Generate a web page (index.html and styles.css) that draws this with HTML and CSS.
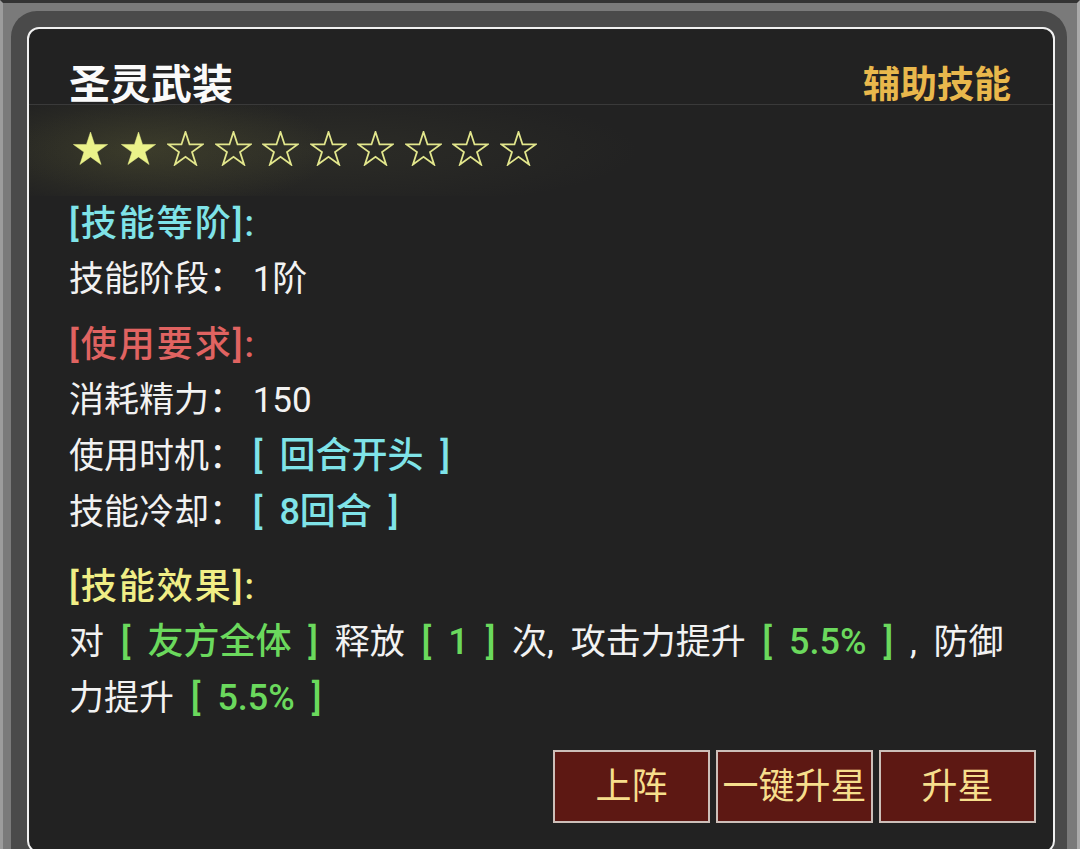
FILE: index.html
```html
<!DOCTYPE html>
<html>
<head>
	<meta charset="utf-8">
	<title>圣灵武装</title>
	<link rel="stylesheet" href="styles.css">
</head>
<body>
	<div class="screen">
	<div class="bezel">
	<div class="panel">

		<div class="title-row">
			<span class="title">圣灵武装</span>
			<span class="kind">辅助技能</span>
		</div>

		<div class="stars">
			<svg class="star full" viewBox="0 0 37 35"><polygon points="18.5,1 22.54,13.44 35.62,13.44 25.03,21.12 29.08,33.56 18.5,25.88 7.92,33.56 11.97,21.12 1.38,13.44 14.46,13.44"/></svg>
			<svg class="star full" viewBox="0 0 37 35"><polygon points="18.5,1 22.54,13.44 35.62,13.44 25.03,21.12 29.08,33.56 18.5,25.88 7.92,33.56 11.97,21.12 1.38,13.44 14.46,13.44"/></svg>
			<svg class="star" viewBox="0 0 37 35"><polygon points="18.5,1 22.54,13.44 35.62,13.44 25.03,21.12 29.08,33.56 18.5,25.88 7.92,33.56 11.97,21.12 1.38,13.44 14.46,13.44"/></svg>
			<svg class="star" viewBox="0 0 37 35"><polygon points="18.5,1 22.54,13.44 35.62,13.44 25.03,21.12 29.08,33.56 18.5,25.88 7.92,33.56 11.97,21.12 1.38,13.44 14.46,13.44"/></svg>
			<svg class="star" viewBox="0 0 37 35"><polygon points="18.5,1 22.54,13.44 35.62,13.44 25.03,21.12 29.08,33.56 18.5,25.88 7.92,33.56 11.97,21.12 1.38,13.44 14.46,13.44"/></svg>
			<svg class="star" viewBox="0 0 37 35"><polygon points="18.5,1 22.54,13.44 35.62,13.44 25.03,21.12 29.08,33.56 18.5,25.88 7.92,33.56 11.97,21.12 1.38,13.44 14.46,13.44"/></svg>
			<svg class="star" viewBox="0 0 37 35"><polygon points="18.5,1 22.54,13.44 35.62,13.44 25.03,21.12 29.08,33.56 18.5,25.88 7.92,33.56 11.97,21.12 1.38,13.44 14.46,13.44"/></svg>
			<svg class="star" viewBox="0 0 37 35"><polygon points="18.5,1 22.54,13.44 35.62,13.44 25.03,21.12 29.08,33.56 18.5,25.88 7.92,33.56 11.97,21.12 1.38,13.44 14.46,13.44"/></svg>
			<svg class="star" viewBox="0 0 37 35"><polygon points="18.5,1 22.54,13.44 35.62,13.44 25.03,21.12 29.08,33.56 18.5,25.88 7.92,33.56 11.97,21.12 1.38,13.44 14.46,13.44"/></svg>
			<svg class="star" viewBox="0 0 37 35"><polygon points="18.5,1 22.54,13.44 35.62,13.44 25.03,21.12 29.08,33.56 18.5,25.88 7.92,33.56 11.97,21.12 1.38,13.44 14.46,13.44"/></svg>
		</div>

		<div class="info">
			<p class="head cyan">[技能等阶]:</p>
			<p>技能阶段： 1阶</p>

			<p class="head red sec">[使用要求]:</p>
			<p>消耗精力： 150</p>
			<p>使用时机： <b class="cyan">[ 回合开头 ]</b></p>
			<p>技能冷却： <b class="cyan">[ 8回合 ]</b></p>

			<p class="head yellow sec2">[技能效果]:</p>
			<p class="effect">对 <b class="green">[ 友方全体 ]</b> 释放 <b class="green">[ 1 ]</b> 次, 攻击力提升 <b class="green">[ 5.5% ]</b> , 防御力提升 <b class="green">[ 5.5% ]</b></p>
		</div>

		<div class="buttons">
			<div class="btn">上阵</div>
			<div class="btn">一键升星</div>
			<div class="btn">升星</div>
		</div>

	</div>
	</div>
	</div>
</body>
</html>
```

FILE: styles.css
```css
html {font-family: Roboto, "Noto Sans CJK SC", sans-serif; color:#f2f2f2;}
body {margin:0; background:#333;}
p {margin:0;}
b {font-weight:500; font-size:36px; line-height:40px; word-spacing:8px;}

.screen {height:849px; overflow:hidden; box-sizing:border-box; background:#7a7a7a;
	border-top:3px solid #333; border-left:3px solid #9c9c9c; border-right:3px solid #aaa;
	padding:8px 10px 0 8px;}
.bezel {background:#4a4a4a; border-radius:26px 26px 0 0; padding:16px 12px 0 16px;}
.panel {background:#222; border:2px solid #f0f0f0; border-radius:12px; height:826px;
	box-sizing:border-box;}

.title-row {display:flex; justify-content:space-between; align-items:flex-end; height:75px;
	padding:0 42px 0 40px; border-bottom:1px solid #3a3a3a;}
.title {font-size:41px; line-height:37px; font-weight:700; color:#fafafa;}
.kind {font-size:37px; line-height:37px; font-weight:700; color:#e9b84c;}

.stars {display:flex; gap:10.5px; padding:26px 0 30px 43px;
	background:
		radial-gradient(ellipse 190px 60px at 115px 45px, rgba(120,120,60,.26), rgba(120,120,60,0)),
		radial-gradient(ellipse 320px 60px at 290px 45px, rgba(90,90,60,.18), rgba(90,90,60,0));}
.star {width:37px; height:35px;}
.star polygon {fill:none; stroke:#e2e68c; stroke-width:1.8;}
.star.full polygon {fill:#ebf28a; stroke:#ebf28a; stroke-width:.5;}

.info {padding:0 40px 0 40px; font-size:35px; line-height:56px;}
.head {font-weight:500; font-size:36px; letter-spacing:2px;}
.sec {margin-top:9px;}
.sec2 {margin-top:18px;}
.effect {word-spacing:8px;}
.cyan {color:#7fe3e8;}
.red {color:#e06361;}
.yellow {color:#f0ee86;}
.green {color:#6bd95d;}

.buttons {display:flex; justify-content:flex-end; gap:6px; padding-right:17px; margin-top:23px;}
.btn {width:157px; height:73px; box-sizing:border-box; border:2px solid #cdbfb9;
	background:#5d1813; color:#f6de8c; font-size:36px; line-height:71px; text-align:center;}
```
